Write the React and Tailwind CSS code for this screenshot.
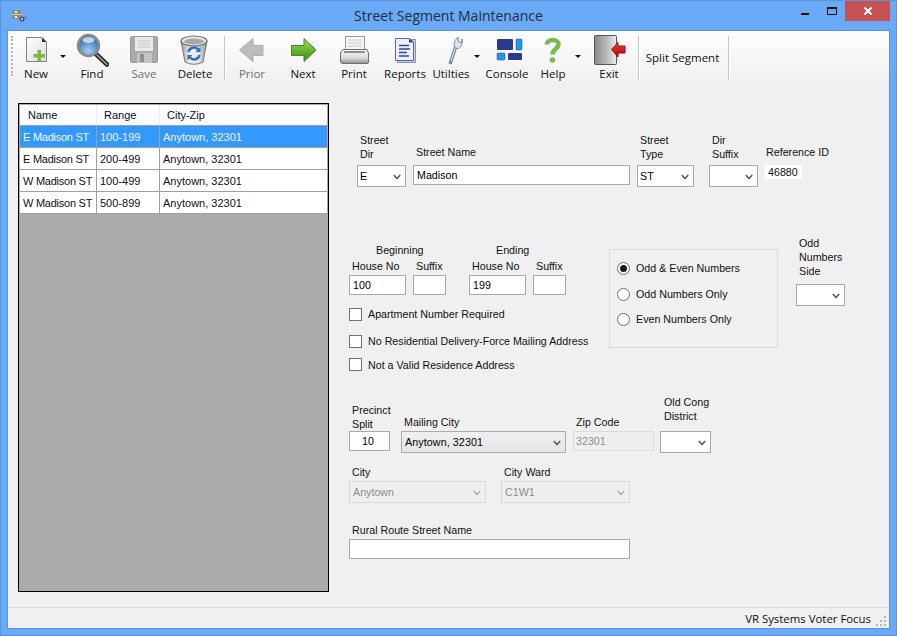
const rows = [
  ["E Madison ST", "100-199", "Anytown, 32301"],
  ["E Madison ST", "200-499", "Anytown, 32301"],
  ["W Madison ST", "100-499", "Anytown, 32301"],
  ["W Madison ST", "500-899", "Anytown, 32301"],
];

function NewIcon() {
  return (
    <svg width="34" height="34" viewBox="0 0 34 34">
      <defs>
        <linearGradient id="newg" x1="0" y1="0" x2="1" y2="1">
          <stop offset="0" stopColor="#ffffff" />
          <stop offset="1" stopColor="#dedede" />
        </linearGradient>
      </defs>
      <path d="M7.500 4.500H23L27.500 9V28.500H7.500Z" fill="url(#newg)" stroke="#808080" />
      <path d="M23 4.500L27.500 9H23Z" fill="#333" />
      <path d="M18.500 17h3.500v4h4v3.500h-4v4h-3.500v-4h-4V21h4Z" fill="#7fb741" />
    </svg>
  );
}

function FindIcon() {
  return (
    <svg width="34" height="34" viewBox="0 0 34 34">
      <defs>
        <radialGradient id="lens" cx="0.5" cy="0.75" r="0.8">
          <stop offset="0" stopColor="#a9cdf2" />
          <stop offset="0.6" stopColor="#4f86c6" />
          <stop offset="1" stopColor="#2c5c9e" />
        </radialGradient>
      </defs>
      <path d="M21 21L32 31.500" stroke="#222" strokeWidth="4.500" strokeLinecap="round" />
      <path d="M22 22L32 31.500" stroke="#aaa" strokeWidth="1.500" strokeLinecap="round" />
      <circle cx="13.500" cy="12.500" r="10.500" fill="url(#lens)" stroke="#8c8c8c" strokeWidth="2.500" />
      <ellipse cx="13.500" cy="7" rx="6" ry="3" fill="#d8e8f8" opacity="0.8" />
    </svg>
  );
}

function SaveIcon() {
  return (
    <svg width="34" height="34" viewBox="0 0 34 34">
      <rect x="3.500" y="3.500" width="27" height="26" rx="1.500" fill="#a9a9a9" stroke="#9a9a9a" />
      <rect x="8" y="4" width="18" height="14" fill="#e9e9e9" />
      <path d="M11 8h12M11 11h12M11 14h12" stroke="#c8c8c8" />
      <rect x="10" y="20" width="15" height="10" fill="#c4c4c4" />
      <rect x="13" y="21" width="4" height="8" fill="#8e8e8e" />
    </svg>
  );
}

function DeleteIcon() {
  return (
    <svg width="34" height="34" viewBox="0 0 34 34">
      <defs>
        <linearGradient id="bin" x1="0" y1="0" x2="1" y2="0">
          <stop offset="0" stopColor="#9a9a9a" />
          <stop offset="0.35" stopColor="#f2f2f2" />
          <stop offset="0.7" stopColor="#e2e2e2" />
          <stop offset="1" stopColor="#8f8f8f" />
        </linearGradient>
      </defs>
      <path d="M3 8L7 29Q16 33.500 25 29L29 8Z" fill="url(#bin)" stroke="#777" />
      <ellipse cx="16" cy="8" rx="13" ry="5" fill="#e6e6e6" stroke="#6f6f6f" strokeWidth="1.200" />
      <ellipse cx="16" cy="8.500" rx="10" ry="3" fill="#a8a8a8" />
      <path d="M10.500 19A5.500 5.500 0 0 1 20 16.500" fill="none" stroke="#2f6fc0" strokeWidth="2.500" />
      <path d="M22.500 13.500V19H17.500Z" fill="#2f6fc0" />
      <path d="M21.500 22A5.500 5.500 0 0 1 12 24.500" fill="none" stroke="#2f6fc0" strokeWidth="2.500" />
      <path d="M9.500 27.500V22H14.500Z" fill="#2f6fc0" />
    </svg>
  );
}

function PriorIcon() {
  return (
    <svg width="34" height="34" viewBox="0 0 34 34">
      <path d="M4.500 17L18 5.500V12.500H28V22.500H18V28.500Z" fill="#bcbcbc" stroke="#ababab" />
    </svg>
  );
}

function NextIcon() {
  return (
    <svg width="34" height="34" viewBox="0 0 34 34">
      <defs>
        <linearGradient id="nextg" x1="0" y1="0" x2="0" y2="1">
          <stop offset="0" stopColor="#a8dc5a" />
          <stop offset="0.55" stopColor="#5fb32a" />
          <stop offset="1" stopColor="#3f8f1c" />
        </linearGradient>
      </defs>
      <path d="M5.500 12.500H18V5.500L30 17L18 28.500V22.500H5.500Z" fill="url(#nextg)" stroke="#4d7f2a" />
    </svg>
  );
}

function PrintIcon() {
  return (
    <svg width="34" height="34" viewBox="0 0 34 34">
      <defs>
        <linearGradient id="printg" x1="0" y1="0" x2="0" y2="1">
          <stop offset="0" stopColor="#f4f4f4" />
          <stop offset="0.6" stopColor="#dcdcdc" />
          <stop offset="1" stopColor="#8d8d8d" />
        </linearGradient>
      </defs>
      <rect x="8.500" y="3.500" width="19" height="15" fill="#f6f6f6" stroke="#9a9a9a" />
      <path d="M11 7h14M11 10h14M11 13h14" stroke="#c9c9c9" />
      <path d="M6 16.500H30L31.500 20V29A1.500 1.500 0 0 1 30 30.500H6A2.500 2.500 0 0 1 3.500 29V20Z" fill="url(#printg)" stroke="#6e6e6e" />
      <rect x="7" y="18" width="21" height="2" fill="#8c8c8c" />
    </svg>
  );
}

function ReportsIcon() {
  return (
    <svg width="34" height="34" viewBox="0 0 34 34">
      <rect x="9.500" y="6.500" width="18" height="23" fill="#c4c9e6" stroke="#8b93c4" />
      <path d="M7.500 5.500H21L25.500 9V27.500H7.500Z" fill="#eef1fb" stroke="#5b67ac" />
      <path d="M21 5.500L25.500 9.500H21Z" fill="#2c3f8e" />
      <path d="M11 12.500h10M11 16h11M11 19.500h8M11 23h10" stroke="#2f4a9c" strokeWidth="1.500" />
    </svg>
  );
}

function UtilitiesIcon() {
  return (
    <svg width="34" height="34" viewBox="0 0 34 34">
      <path d="M16.500 29.500L22 13" stroke="#7d87a8" strokeWidth="3.500" strokeLinecap="round" />
      <path d="M17 28L22 13" stroke="#e4e7f0" strokeWidth="1" />
      <path d="M21 15C19 10 21 7 24 4L24.500 9L27 10L28 6C29 10 27.500 14 24.500 15.500Z" fill="#dfe2ec" stroke="#7d87a8" />
    </svg>
  );
}

function ConsoleIcon() {
  return (
    <svg width="34" height="34" viewBox="0 0 34 34">
      <rect x="7" y="6" width="16" height="11" rx="1" fill="#2b3a8f" />
      <rect x="26" y="6" width="6" height="11" rx="1" fill="#1c9ce8" stroke="#2b3a8f" strokeWidth="0.500" />
      <rect x="7" y="20" width="8" height="7" rx="1" fill="#1c9ce8" stroke="#2b3a8f" strokeWidth="0.500" />
      <rect x="18" y="20" width="14" height="7" rx="1" fill="#2b3a8f" />
    </svg>
  );
}

function HelpIcon() {
  return (
    <svg width="34" height="34" viewBox="0 0 34 34">
      <path d="M11 11.500C11 5.500 22.500 5.500 22.500 11.500C22.500 16 16.500 15.500 16.500 21.500" fill="none" stroke="#7cb850" strokeWidth="4.500" />
      <circle cx="16.500" cy="27" r="2.800" fill="#7cb850" />
    </svg>
  );
}

function ExitIcon() {
  return (
    <svg width="34" height="34" viewBox="0 0 34 34">
      <defs>
        <linearGradient id="door" x1="0" y1="0" x2="1" y2="0">
          <stop offset="0" stopColor="#8a8a8a" />
          <stop offset="0.5" stopColor="#b4b4b4" />
          <stop offset="1" stopColor="#ececec" />
        </linearGradient>
        <linearGradient id="exitarrow" x1="0" y1="0" x2="0" y2="1">
          <stop offset="0" stopColor="#f04040" />
          <stop offset="1" stopColor="#b80000" />
        </linearGradient>
      </defs>
      <rect x="2.500" y="2.500" width="22" height="29" rx="1" fill="url(#door)" stroke="#555" />
      <path d="M19.500 16.500L26 9.500V13H33V20H26V24Z" fill="url(#exitarrow)" stroke="#8f0f0f" />
    </svg>
  );
}

function TitleIcon() {
  return (
    <svg width="14" height="12" viewBox="0 0 14 12">
      <rect x="0" y="0" width="9" height="9" fill="#8c8c8c" />
      <rect x="0" y="4" width="10" height="1" fill="#e8d44a" />
      <rect x="3" y="1" width="2" height="2" fill="#eee" />
      <rect x="3" y="6" width="2" height="2" fill="#eee" />
      <circle cx="10" cy="9" r="2.500" fill="#4a4a8a" />
      <circle cx="10" cy="9" r="1" fill="#ddd" />
      <circle cx="13.500" cy="7.500" r="0.800" fill="#4a4a8a" />
    </svg>
  );
}

function ToolButton({ label, width, muted, children }) {
  return (
    <button
      className={`flex flex-col items-center pt-[2px] shrink-0 h-full ${width} ${muted ? "text-[#6f6f6f]" : "text-[#101010]"}`}
    >
      {children}
      <span className="h-[14px] leading-[14px] whitespace-nowrap">{label}</span>
    </button>
  );
}

function DropArrow({ width }) {
  return (
    <div className={`flex justify-center pt-[24px] shrink-0 ${width}`}>
      <div className="w-0 h-0 border-x-[3px] border-x-transparent border-t-[3px] border-t-[#111]" />
    </div>
  );
}

function Sep({ className }) {
  return <div className={`w-[2px] h-[44px] mt-[5px] border-l border-[#c6c6c6] border-r-0 bg-white shrink-0 ${className}`} />;
}

function Chevron({ color = "#606060" }) {
  return (
    <svg width="8" height="6" viewBox="0 0 8 6" className="absolute right-[5px] top-[9px] pointer-events-none">
      <path d="M.8 1L4 4.500L7.200 1" fill="none" stroke={color} strokeWidth="1.800" />
    </svg>
  );
}

function Select({ value, width, disabled, tone }) {
  const look = disabled
    ? "border-[#d9d9d9] text-[#8c8c8c] bg-[#efefef] pl-[3px]"
    : tone === "gray"
      ? "border-[#acacac] text-black bg-gradient-to-b from-[#f0f0f0] to-[#e5e5e5] pl-[3px] tracking-[0.1px]"
      : "border-[#a9a9a9] text-black bg-white pl-[2px]";
  return (
    <div className={`relative h-[22px] ${width}`}>
      <select
        disabled={disabled}
        defaultValue={value}
        className={`w-full h-full border appearance-none outline-none opacity-100 ${look}`}
      >
        <option value={value}>{value}</option>
      </select>
      <Chevron color={disabled ? "#b5b5b5" : "#606060"} />
    </div>
  );
}

function Input({ value, width, className = "pl-[3px]" }) {
  return (
    <input
      readOnly
      value={value}
      className={`h-[20px] border border-[#a9a9a9] bg-white outline-none text-black ${width} ${className}`}
    />
  );
}

function Check({ label, className, textClass = "" }) {
  return (
    <label className={`flex items-center h-[13px] ${className}`}>
      <span className="w-[13px] h-[13px] border border-[#707070] bg-white shrink-0" />
      <span className={`ml-[6px] whitespace-nowrap ${textClass}`}>{label}</span>
    </label>
  );
}

function Radio({ label, checked, className }) {
  return (
    <label className={`flex items-center h-[14px] ${className}`}>
      <span className="w-[13px] h-[13px] rounded-full border border-[#707070] bg-white shrink-0 flex items-center justify-center">
        {checked && <span className="w-[7px] h-[7px] rounded-full bg-[#1a1a1a]" />}
      </span>
      <span className="ml-[6px] whitespace-nowrap">{label}</span>
    </label>
  );
}

function Label({ children, className = "pl-[3px]" }) {
  return <div className={`leading-[14px] whitespace-pre-line ${className}`}>{children}</div>;
}

export default function App() {
  return (
    <div className="w-[897px] h-[636px] flex flex-col bg-[#69a9f5] border border-[#5a94dc] overflow-hidden font-['Liberation_Sans',sans-serif] text-[10.7px] text-[#111]">
      {/* title bar */}
      <div className="h-[29px] shrink-0 grid grid-cols-[1fr_auto_1fr]">
        <div className="pl-[11px] pt-[9px]">
          <TitleIcon />
        </div>
        <div className="font-['Open_Sans',sans-serif] text-[14px] leading-[30px] text-[#1f2d3d]">
          Street Segment Maintenance
        </div>
        <div className="flex justify-end pr-[6px]">
          <div className="w-[8px] h-[2px] bg-[#111] mt-[12px] mr-[18px]" />
          <div className="w-[10px] h-[8px] border border-[#111] border-t-2 mt-[6px] mr-[8px]" />
          <button className="w-[45px] h-[20px] bg-[#c75050] flex items-center justify-center">
            <svg width="10" height="10" viewBox="0 0 10 10">
              <path d="M1.500 1.500L8.500 8.500M8.500 1.500L1.500 8.500" stroke="#fff" strokeWidth="2" />
            </svg>
          </button>
        </div>
      </div>

      {/* window body */}
      <div className="flex-1 mx-[6px] mb-[6px] flex flex-col border border-[#5a94dc] bg-[#f0f0f0] min-h-0">
        {/* toolbar */}
        <div className="h-[52px] shrink-0 flex pl-[3px] bg-gradient-to-b from-[#fefefe] to-[#f0f0f0] font-['Open_Sans',sans-serif] text-[11.5px]">
          <div className="w-[2px] h-[40px] mt-[5px] border-l-2 border-dotted border-[#b4b4b4] shrink-0" />
          <ToolButton label="New" width="w-[46px]"><NewIcon /></ToolButton>
          <DropArrow width="w-[7px]" />
          <ToolButton label="Find" width="w-[52px]"><FindIcon /></ToolButton>
          <ToolButton label="Save" width="w-[52px]" muted><SaveIcon /></ToolButton>
          <ToolButton label="Delete" width="w-[50px]"><DeleteIcon /></ToolButton>
          <Sep className="ml-[4px] mr-[-1px]" />
          <ToolButton label="Prior" width="w-[54px]" muted><PriorIcon /></ToolButton>
          <ToolButton label="Next" width="w-[48px]"><NextIcon /></ToolButton>
          <ToolButton label="Print" width="w-[54px]"><PrintIcon /></ToolButton>
          <ToolButton label="Reports" width="w-[48px]"><ReportsIcon /></ToolButton>
          <ToolButton label="Utilties" width="w-[44px]"><UtilitiesIcon /></ToolButton>
          <DropArrow width="w-[7px]" />
          <ToolButton label="Console" width="w-[54px]"><ConsoleIcon /></ToolButton>
          <ToolButton label="Help" width="w-[38px]"><HelpIcon /></ToolButton>
          <DropArrow width="w-[12px]" />
          <ToolButton label="Exit" width="w-[50px]"><ExitIcon /></ToolButton>
          <Sep className="ml-[4px] mr-[-1px]" />
          <button className="w-[86px] shrink-0 h-full pt-[2px] pl-[1px] whitespace-nowrap text-[#101010]">Split Segment</button>
          <Sep className="ml-[3px]" />
        </div>

        {/* main */}
        <div className="flex-1 flex pt-[20px] pl-[10px] min-h-0">
          {/* list */}
          <div className="w-[311px] h-[489px] border border-black p-[1px] bg-[#ababab] shrink-0 text-[11px]">
            <div className="grid grid-cols-[77px_63px_1fr] h-[21px] bg-gradient-to-b from-white to-[#f6f9fd] border-b border-[#a0a0a0] leading-[20px]">
              <div className="pl-[8px] border-r border-[#e6eef8]">Name</div>
              <div className="pl-[7px] border-r border-[#e6eef8]">Range</div>
              <div className="pl-[7px]">City-Zip</div>
            </div>
            {rows.map((r, i) => (
              <div
                key={i}
                className={`grid grid-cols-[77px_63px_1fr] h-[22px] border-b border-[#a0a0a0] pt-[1px] leading-[21px] ${i === 0 ? "bg-[#3399ff] text-[#f2f7ff]" : "bg-white text-[#111]"}`}
              >
                <div className="pl-[3px] -mt-[1px] pt-[1px] border-r border-[#a0a0a0] whitespace-nowrap tracking-[-0.25px]">{r[0]}</div>
                <div className="pl-[3px] -mt-[1px] pt-[1px] border-r border-[#a0a0a0]">{r[1]}</div>
                <div className="pl-[3px]">{r[2]}</div>
              </div>
            ))}
          </div>

          {/* form */}
          <div className="ml-[20px] flex flex-col">
            {/* street row */}
            <div className="flex mt-[30px]">
              <div className="ml-[8px] w-[49px]">
                <Label className="h-[32px] pl-[3px]">{"Street\nDir"}</Label>
                <Select value="E" width="w-[49px]" />
              </div>
              <div className="ml-[7px] w-[217px]">
                <Label className="h-[32px] pt-[12px] pl-[3px]">Street Name</Label>
                <Input value="Madison" width="w-[217px]" />
              </div>
              <div className="ml-[7px] w-[57px]">
                <Label className="h-[32px] pl-[3px]">{"Street\nType"}</Label>
                <Select value="ST" width="w-[57px]" />
              </div>
              <div className="ml-[15px] w-[49px]">
                <Label className="h-[32px] pl-[3px]">{"Dir\nSuffix"}</Label>
                <Select value="" width="w-[49px]" />
              </div>
              <div className="ml-[7px]">
                <Label className="h-[32px] pt-[12px] pl-[1px] whitespace-nowrap">Reference ID</Label>
                <div className="w-[37px] h-[14px] bg-white leading-[14px] pl-[3px] text-[#111]">46880</div>
              </div>
            </div>

            {/* house number row */}
            <div className="flex mt-[49px]">
              <div className="w-[260px] pt-[7px] shrink-0">
                <div className="flex">
                  <div className="w-[97px]">
                    <div className="pl-[27px] leading-[14px] h-[16px]">Beginning</div>
                    <div className="flex">
                      <div className="w-[64px]">
                        <Label className="h-[16px] pl-[3px]">House No</Label>
                        <Input value="100" width="w-[57px]" />
                      </div>
                      <div>
                        <Label className="h-[16px] pl-[3px]">Suffix</Label>
                        <Input value="" width="w-[33px]" />
                      </div>
                    </div>
                  </div>
                  <div className="w-[97px] ml-[23px]">
                    <div className="pl-[27px] leading-[14px] h-[16px]">Ending</div>
                    <div className="flex">
                      <div className="w-[64px]">
                        <Label className="h-[16px] pl-[3px]">House No</Label>
                        <Input value="199" width="w-[57px]" />
                      </div>
                      <div>
                        <Label className="h-[16px] pl-[3px]">Suffix</Label>
                        <Input value="" width="w-[33px]" />
                      </div>
                    </div>
                  </div>
                </div>
                <Check label="Apartment Number Required" className="mt-[13px]" />
                <Check label="No Residential Delivery-Force Mailing Address" className="mt-[14px]" />
                <Check label="Not a Valid Residence Address" className="mt-[10px]" textClass="pt-[1px]" />
              </div>

              <div className="w-[169px] h-[99px] mt-[13px] border border-[#d9d9d9] pl-[7px] pt-[11px] shrink-0">
                <Radio label="Odd & Even Numbers" checked />
                <Radio label="Odd Numbers Only" className="mt-[12px]" />
                <Radio label="Even Numbers Only" className="mt-[11px]" />
              </div>

              <div className="ml-[18px]">
                <Label className="h-[48px] pl-[3px]">{"Odd\nNumbers\nSide"}</Label>
                <Select value="" width="w-[49px]" />
              </div>
            </div>

            {/* mailing row */}
            <div className="flex mt-[24px]">
              <div className="w-[41px]">
                <Label className="h-[36px] pt-[8px] pl-[3px] whitespace-nowrap">{"Precinct\nSplit"}</Label>
                <Input value="10" width="w-[41px]" className="pl-[12px]" />
              </div>
              <div className="ml-[11px]">
                <Label className="h-[36px] pt-[20px] pl-[3px]">Mailing City</Label>
                <Select value="Anytown, 32301" width="w-[165px]" tone="gray" />
              </div>
              <div className="ml-[7px]">
                <Label className="h-[36px] pt-[20px] pl-[3px]">Zip Code</Label>
                <input
                  readOnly
                  value="32301"
                  className="w-[81px] h-[20px] border border-[#dcdcdc] bg-[#efefef] pl-[2px] text-[#8c8c8c] outline-none"
                />
              </div>
              <div className="ml-[6px]">
                <Label className="h-[36px] pl-[4px] whitespace-nowrap">{"Old Cong\nDistrict"}</Label>
                <Select value="" width="w-[51px]" />
              </div>
            </div>

            {/* city row */}
            <div className="flex mt-[12px]">
              <div>
                <Label className="h-[16px] pl-[3px]">City</Label>
                <Select value="Anytown" width="w-[137px]" disabled />
              </div>
              <div className="ml-[15px]">
                <Label className="h-[16px] pl-[3px]">City Ward</Label>
                <Select value="C1W1" width="w-[129px]" disabled />
              </div>
            </div>

            {/* rural route */}
            <div className="mt-[20px]">
              <Label className="h-[16px] pl-[3px]">Rural Route Street Name</Label>
              <Input value="" width="w-[281px]" />
            </div>
          </div>
        </div>

        {/* status bar */}
        <div className="h-[21px] shrink-0 border-t border-[#d9d9d9] flex items-center justify-end pt-[1px] font-['Open_Sans',sans-serif] text-[11.4px] text-[#101010]">
          <span className="whitespace-nowrap">VR Systems Voter Focus</span>
          <svg width="12" height="12" viewBox="0 0 12 12" className="ml-[5px] mr-[1px] mt-[4px]">
            <path d="M8 1h2v2H8zM4 5h2v2H4zM8 5h2v2H8zM0 9h2v2H0zM4 9h2v2H4zM8 9h2v2H8z" fill="#b8b8b8" />
          </svg>
        </div>
      </div>
    </div>
  );
}
